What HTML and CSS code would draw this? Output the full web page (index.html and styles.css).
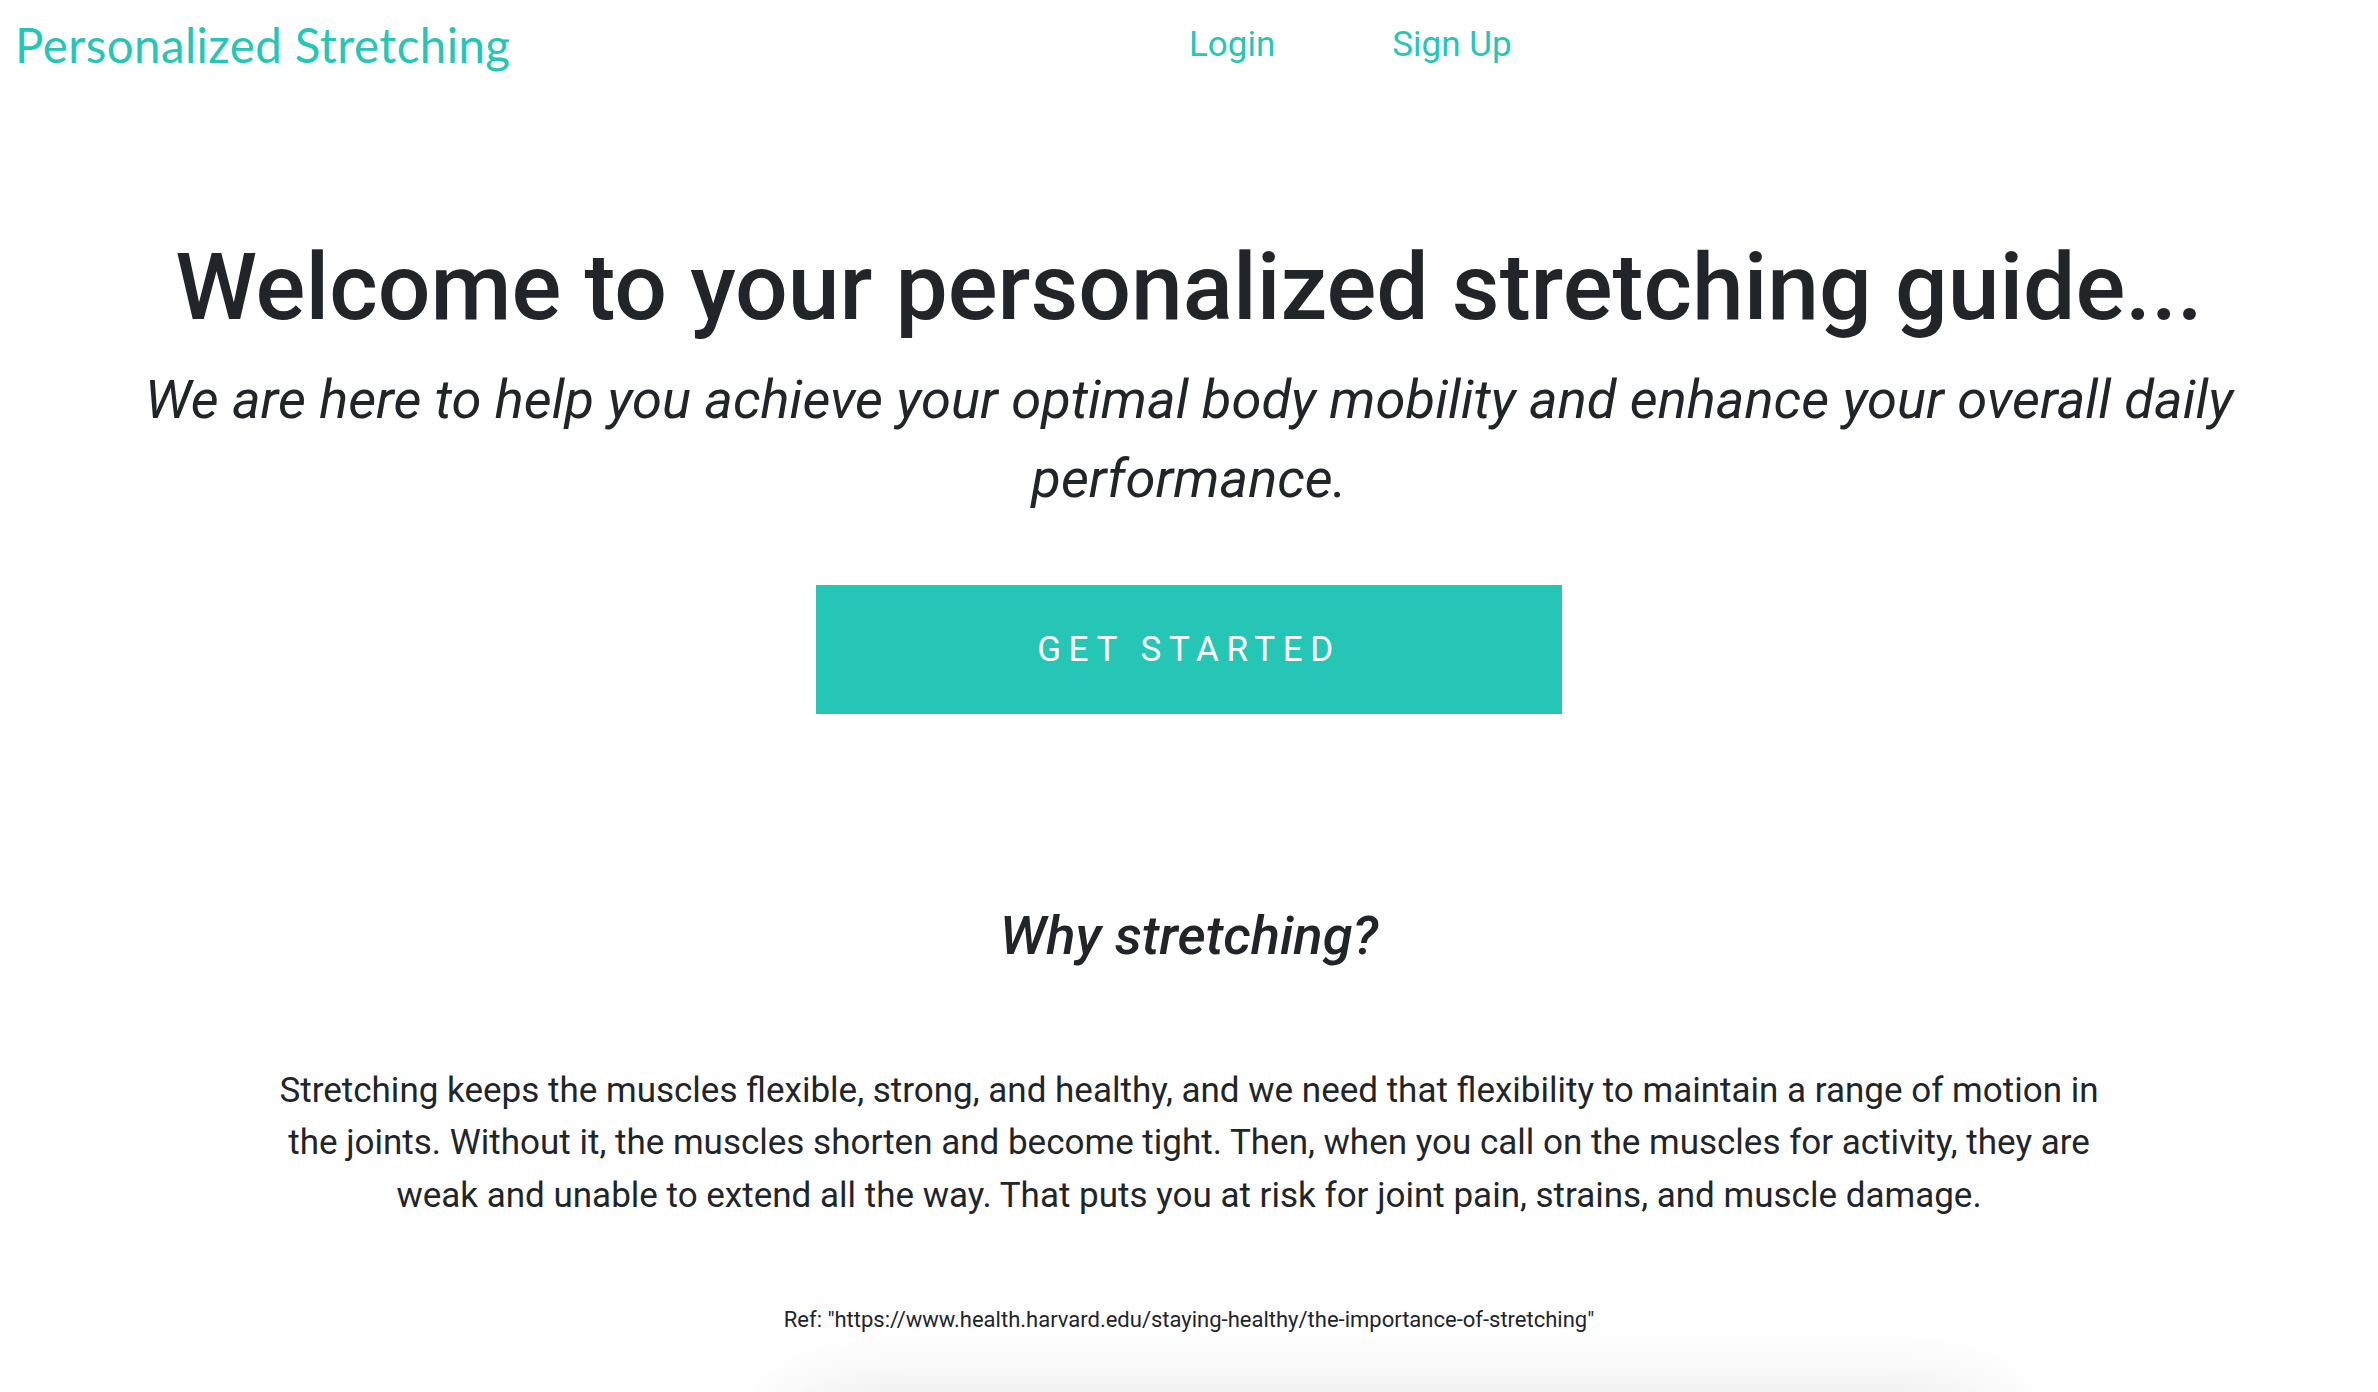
FILE: index.html
```html
<!DOCTYPE html>
<html lang="en">
<head>
<meta charset="utf-8">
<title>Personalized Stretching</title>
<link rel="stylesheet" href="styles.css">
</head>
<body>
<header class="topbar">
  <a class="brand" href="#">Personalized Stretching</a>
  <nav class="nav">
    <a class="nav-link" href="#">Login</a>
    <a class="nav-link" href="#">Sign Up</a>
  </nav>
</header>
<main class="main">
  <section class="hero">
    <h1 class="hero-title">Welcome to your personalized stretching guide...</h1>
    <p class="hero-lead">We are here to help you achieve your optimal body mobility and enhance your overall daily performance.</p>
    <a class="cta" href="#">GET STARTED</a>
  </section>
  <section class="why">
    <h2 class="why-title">Why stretching?</h2>
    <p class="why-text">Stretching keeps the muscles flexible, strong, and healthy, and we need that flexibility to maintain a range of motion in the joints. Without it, the muscles shorten and become tight. Then, when you call on the muscles for activity, they are weak and unable to extend all the way. That puts you at risk for joint pain, strains, and muscle damage.</p>
    <p class="why-ref">Ref: "https://www.health.harvard.edu/staying-healthy/the-importance-of-stretching"</p>
  </section>
  <section class="cards">
    <div class="card"></div>
  </section>
</main>
</body>
</html>
```

FILE: styles.css
```css
* { box-sizing: border-box; }

html, body {
  margin: 0;
  padding: 0;
  background: #ffffff;
}

body {
  font-family: Roboto, "Liberation Sans", Arial, sans-serif;
  color: #212529;
  overflow: hidden;
}

a { text-decoration: none; }

.topbar {
  display: grid;
  grid-template-columns: 1fr 1fr;
  height: 95px;
}

.brand {
  font-family: Lato, "Noto Sans", sans-serif;
  font-size: 47.5px;
  line-height: 1.2;
  color: #26c6b7;
  padding: 16px 0 0 15px;
  letter-spacing: 0.4px;
}

.nav {
  display: flex;
  gap: 117px;
  padding-top: 19px;
}

.nav-link {
  font-size: 35px;
  line-height: 1.5;
  color: #26c6b7;
}

.main {
  text-align: center;
}

.hero {
  padding-top: 137px;
}

.hero-title {
  margin: 0 0 16px;
  font-size: 93px;
  font-weight: 500;
  line-height: 1.2;
  color: #212529;
}

.hero-lead {
  margin: 0 auto;
  max-width: 2200px;
  font-size: 54.3px;
  font-style: italic;
  font-weight: 400;
  line-height: 79px;
}

.cta {
  display: flex;
  align-items: center;
  justify-content: center;
  width: 746px;
  height: 129px;
  margin: 67px auto 0;
  background: #26c6b7;
  color: #ffffff;
  font-size: 35px;
  letter-spacing: 7.6px;
}

.why {
  padding-top: 189px;
}

.why-title {
  margin: 0;
  font-size: 54.3px;
  font-style: italic;
  font-weight: 500;
  line-height: 1.2;
}

.why-text {
  margin: 97px auto 0;
  max-width: 1870px;
  font-size: 35px;
  line-height: 1.5;
}

.why-ref {
  margin: 81px 0 0;
  font-size: 22px;
  line-height: 1.5;
}

.cards {
  padding-top: 80px;
  padding-left: 805px;
}

.card {
  width: 1180px;
  height: 400px;
  background: #ffffff;
  box-shadow: 0 0 90px rgba(0, 0, 0, 0.18);
}
```
